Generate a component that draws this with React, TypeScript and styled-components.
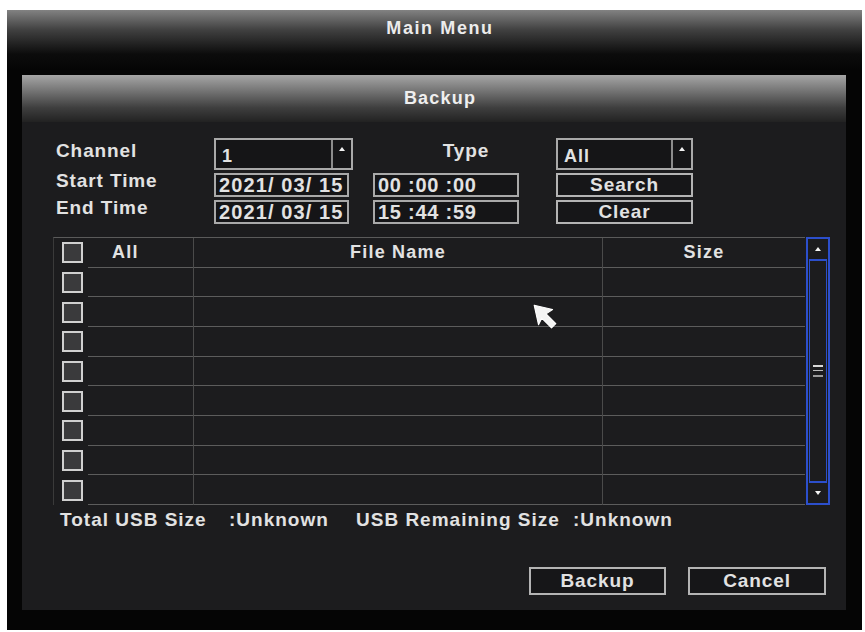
import styled, { createGlobalStyle } from "styled-components";

const GlobalStyle = createGlobalStyle`
  html, body {
    margin: 0;
    padding: 0;
    background: #ffffff;
  }
  body {
    font-family: "Liberation Sans", Arial, sans-serif;
  }
`;

const Screen = styled.div`
  position: relative;
  width: 865px;
  height: 632px;
  box-sizing: border-box;
  padding: 10px 3px 2px 7px;
`;

const Frame = styled.div`
  height: 100%;
  display: flex;
  flex-direction: column;
  background: linear-gradient(180deg, #828282 0px, #404040 20px, #0c0c0c 44px, #050505 60px);
`;

const TitleBar = styled.div`
  height: 36px;
  display: flex;
  align-items: center;
  justify-content: center;
  padding-left: 11px;
  color: #ececec;
  font-size: 18px;
  font-weight: bold;
  letter-spacing: 1.6px;
`;

const Panel = styled.div`
  flex: 1;
  display: flex;
  flex-direction: column;
  margin: 29px 16px 20px 15px;
`;

const PanelHeader = styled.div`
  height: 47px;
  display: flex;
  align-items: center;
  justify-content: center;
  padding-left: 12px;
  color: #efefef;
  font-size: 18px;
  font-weight: bold;
  letter-spacing: 1.2px;
  background: linear-gradient(180deg, #a6a6a6 0%, #7a7a7a 30%, #3e3e3e 70%, #222 100%);
`;

const PanelBody = styled.div`
  flex: 1;
  display: flex;
  flex-direction: column;
  background: #1c1c1e;
  padding: 16px 16px 15px 31px;
  color: #e2e2e2;
  font-size: 19px;
  font-weight: bold;
`;

const Form = styled.div`
  display: grid;
  grid-template-columns: 161px 139px 20px 146px 37px 137px;
  grid-template-rows: 32px 24px 24px;
  row-gap: 3px;
`;

const Label = styled.div<{ $center?: boolean; $top?: number }>`
  align-self: start;
  margin-top: ${({ $top }) => `${$top ?? -2}px`};
  line-height: 20px;
  padding-left: ${({ $center }) => ($center ? "40px" : "3px")};
  text-align: ${({ $center }) => ($center ? "center" : "left")};
  letter-spacing: 0.9px;
`;

const Field = styled.div<{ $w?: number; $spacing?: number }>`
  box-sizing: border-box;
  width: ${({ $w }) => ($w ? `${$w}px` : "100%")};
  height: 100%;
  border: 2px solid #a9a9a9;
  background: #151517;
  padding-left: 3px;
  display: flex;
  align-items: center;
  font-size: 20px;
  letter-spacing: ${({ $spacing }) => `${$spacing ?? 1.1}px`};
  white-space: pre;
`;

const Select = styled.div`
  box-sizing: border-box;
  height: 100%;
  border: 2px solid #a9a9a9;
  background: #151517;
  display: flex;
`;

const SelectValue = styled.div`
  flex: 1;
  padding: 6px 0 0 6px;
  font-size: 18px;
  letter-spacing: 1px;
`;

const SelectArrow = styled.div`
  width: 18px;
  border-left: 2px solid #8c8c8c;
  display: flex;
  justify-content: center;
  padding-top: 7px;
  &::after {
    content: "";
    width: 0;
    height: 0;
    border-left: 3px solid transparent;
    border-right: 3px solid transparent;
    border-bottom: 4px solid #f2f2f2;
  }
`;

const Button = styled.div<{ $w?: number }>`
  box-sizing: border-box;
  width: ${({ $w }) => ($w ? `${$w}px` : "100%")};
  height: 100%;
  border: 2px solid #b4b4b4;
  background: #161618;
  display: flex;
  align-items: center;
  justify-content: center;
  letter-spacing: 0.9px;
`;

const TableWrap = styled.div`
  display: flex;
  height: 268px;
  margin-top: 13px;
`;

const Table = styled.div`
  flex: 1;
  display: grid;
  grid-template-columns: 140px 409px 1fr;
  grid-template-rows: repeat(9, 1fr);
  border-top: 1px solid #5a5a5a;
  border-left: 1px solid #3a3a3a;
`;

const Cell = styled.div<{ $first?: boolean; $last?: boolean }>`
  display: flex;
  align-items: center;
  justify-content: ${({ $first }) => ($first ? "flex-start" : "center")};
  border-right: ${({ $last }) => ($last ? "none" : "1px solid #4a4a4a")};
  background: ${({ $first }) =>
    $first
      ? "linear-gradient(#5c5c5c, #5c5c5c) no-repeat right bottom / calc(100% - 34px) 1px"
      : "linear-gradient(#5c5c5c, #5c5c5c) no-repeat left bottom / 100% 1px"};
  padding-left: ${({ $first }) => ($first ? "8px" : "0")};
  gap: 29px;
  font-size: 18px;
  letter-spacing: 1.2px;
`;

const Check = styled.div`
  box-sizing: border-box;
  width: 21px;
  height: 21px;
  border: 2px solid #d0d0d0;
  background: #3a3a3c;
`;

const ScrollBar = styled.div`
  width: 24px;
  margin-left: 1px;
  box-sizing: border-box;
  border: 2px solid #2c4fcc;
  display: flex;
  flex-direction: column;
`;

const ScrollArrow = styled.div<{ $down?: boolean }>`
  height: 20px;
  display: flex;
  align-items: center;
  justify-content: center;
  &::after {
    content: "";
    width: 0;
    height: 0;
    border-left: 3px solid transparent;
    border-right: 3px solid transparent;
    ${({ $down }) =>
      $down ? "border-top: 4px solid #f4f4f4;" : "border-bottom: 4px solid #f4f4f4;"}
  }
`;

const ScrollTrack = styled.div`
  flex: 1;
  border: 2px solid #2c4fcc;
  border-left-width: 1px;
  border-right-width: 1px;
  margin: 0 1px;
  display: flex;
  align-items: center;
  justify-content: center;
`;

const Grip = styled.div`
  width: 10px;
  height: 8px;
  border-top: 2px solid #d8d8d8;
  border-bottom: 2px solid #9a9a9a;
  position: relative;
  &::after {
    content: "";
    position: absolute;
    left: 0;
    right: 0;
    top: 3px;
    height: 1px;
    background: #bcbcbc;
  }
`;

const InfoRow = styled.div`
  display: grid;
  grid-template-columns: 169px 127px 217px auto;
  margin-top: 5px;
  padding-left: 7px;
  line-height: 20px;
  letter-spacing: 1px;
  white-space: pre;
`;

const Actions = styled.div`
  margin-top: auto;
  display: flex;
  justify-content: flex-end;
  gap: 22px;
  height: 28px;
  padding-right: 4px;
`;

const Pointer = styled.svg`
  position: absolute;
  left: 532px;
  top: 303px;
`;

const rows = Array.from({ length: 8 }, (_, i) => i);

export default function App() {
  return (
    <>
      <GlobalStyle />
      <Screen>
        <Frame>
          <TitleBar>Main Menu</TitleBar>
          <Panel>
            <PanelHeader>Backup</PanelHeader>
            <PanelBody>
              <Form>
                <Label $top={3}>Channel</Label>
                <Select>
                  <SelectValue>1</SelectValue>
                  <SelectArrow />
                </Select>
                <div />
                <Label $center $top={3}>Type</Label>
                <div />
                <Select>
                  <SelectValue>All</SelectValue>
                  <SelectArrow />
                </Select>

                <Label>Start Time</Label>
                <Field $w={135}>2021/ 03/ 15</Field>
                <div />
                <Field $spacing={0.75}>00 :00 :00</Field>
                <div />
                <Button>Search</Button>

                <Label>End Time</Label>
                <Field $w={135}>2021/ 03/ 15</Field>
                <div />
                <Field $spacing={0.75}>15 :44 :59</Field>
                <div />
                <Button>Clear</Button>
              </Form>

              <TableWrap>
                <Table>
                  <Cell $first>
                    <Check />
                    All
                  </Cell>
                  <Cell>File Name</Cell>
                  <Cell $last>Size</Cell>
                  {rows.map((r) => [
                    <Cell $first key={`c${r}`}>
                      <Check />
                    </Cell>,
                    <Cell key={`n${r}`} />,
                    <Cell $last key={`s${r}`} />,
                  ])}
                </Table>
                <ScrollBar>
                  <ScrollArrow />
                  <ScrollTrack>
                    <Grip />
                  </ScrollTrack>
                  <ScrollArrow $down />
                </ScrollBar>
              </TableWrap>

              <InfoRow>
                <span>Total USB Size</span>
                <span>:Unknown</span>
                <span>USB Remaining Size</span>
                <span>:Unknown</span>
              </InfoRow>

              <Actions>
                <Button $w={137}>Backup</Button>
                <Button $w={138}>Cancel</Button>
              </Actions>
            </PanelBody>
          </Panel>
        </Frame>
        <Pointer width="26" height="26" viewBox="0 0 24 24">
          <path
            d="M2 2 L19 6 L13 10 L22 19 L18 23 L9 14 L6 20 Z"
            fill="#f4f4f4"
            stroke="#ffffff"
            strokeWidth="1"
            strokeLinejoin="round"
          />
        </Pointer>
      </Screen>
    </>
  );
}
